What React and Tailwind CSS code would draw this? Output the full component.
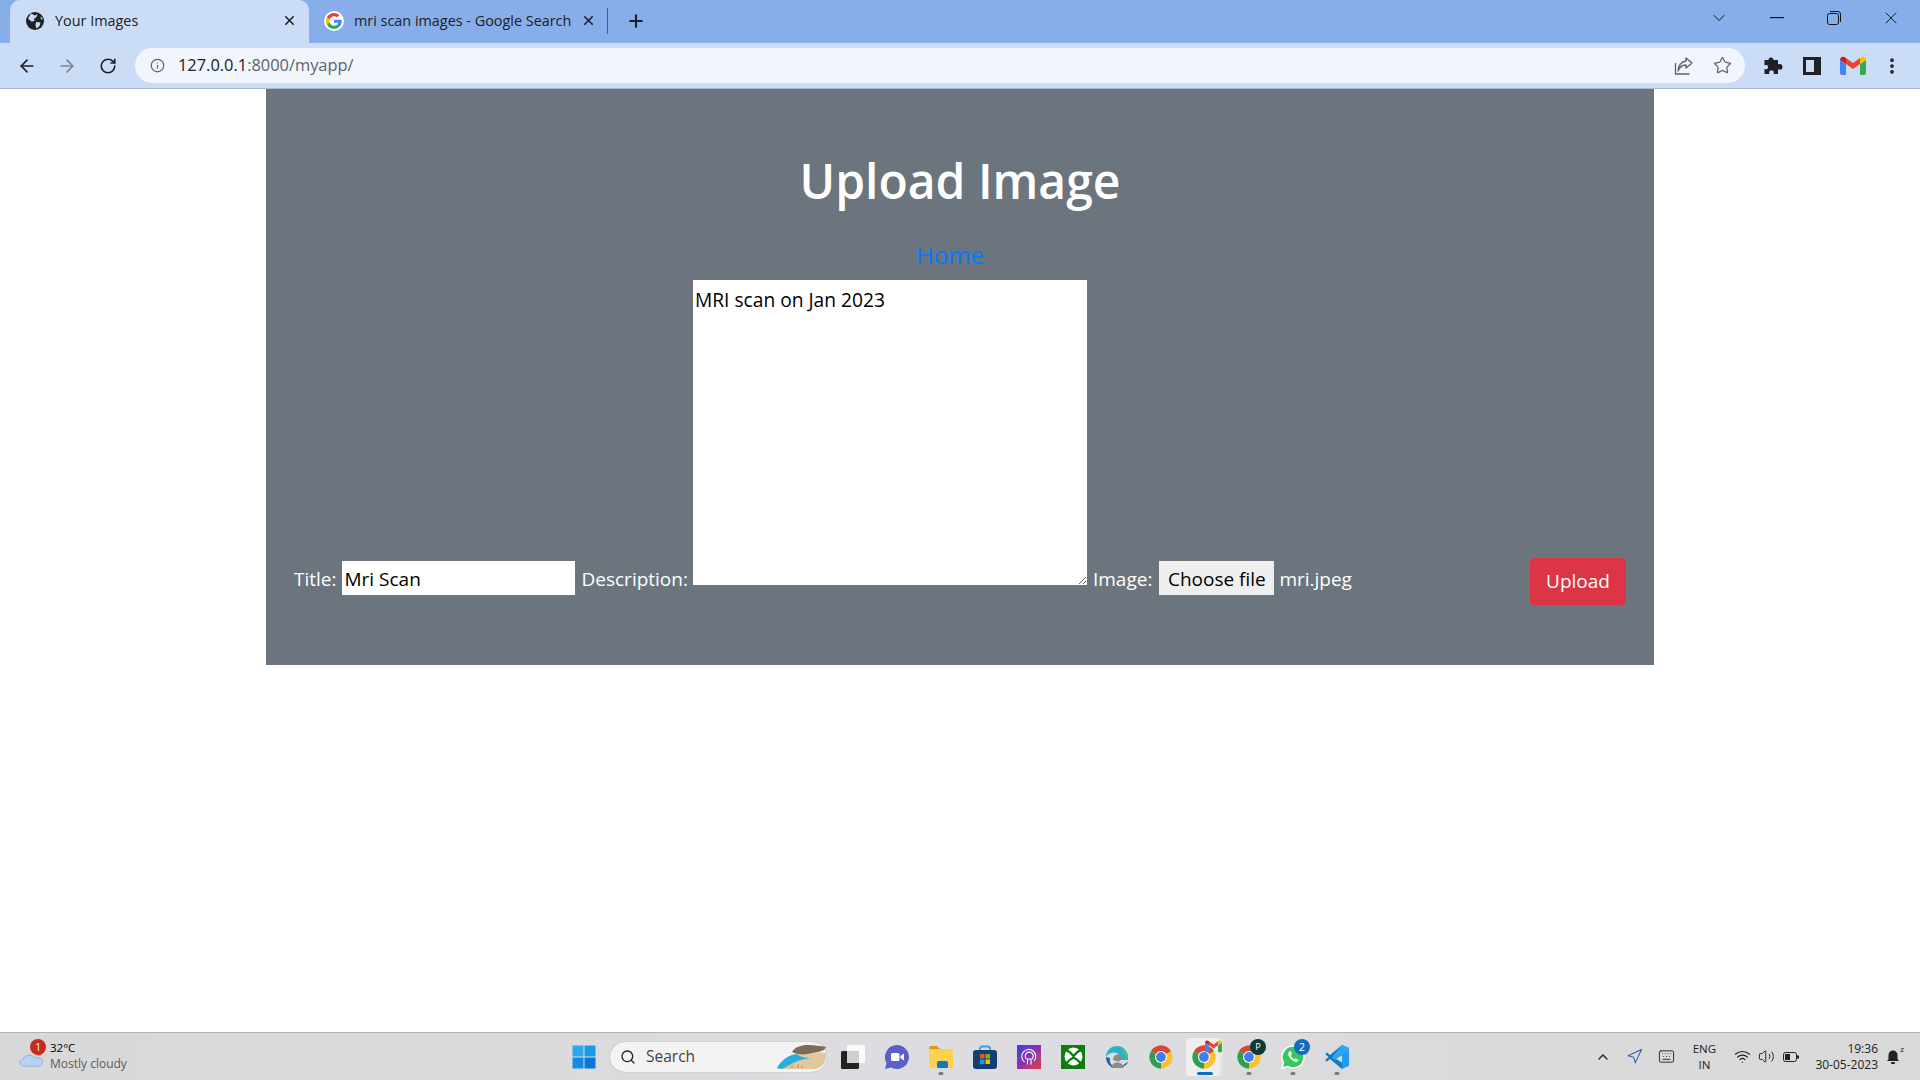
import React from "react";
import {
  ArrowLeft,
  ArrowRight,
  RotateCw,
  Info,
  Star,
  X,
  Plus,
  ChevronDown,
  ChevronUp,
  EllipsisVertical,
  Search,
  Navigation,
  Keyboard,
  Wifi,
  Volume2,
} from "lucide-react";

const font = "font-['Open_Sans','Liberation_Sans',sans-serif]";

function GlobeIcon() {
  return (
    <svg width="18" height="18" viewBox="0 0 18 18">
      <circle cx="9" cy="9" r="9" fill="#202124" />
      <path d="M5 1.500 9 3.500 11.500 2 10.500 5 8 7 8.500 9 5.500 9.500 2 6.500Z" fill="#cbdcf6" />
      <path d="M10 10 14.500 10.500 13.500 14 10.500 16.500 9.500 13.500Z" fill="#cbdcf6" />
      <path d="M14.500 4.500 17 7 15 7.500Z" fill="#cbdcf6" />
    </svg>
  );
}

function GoogleIcon() {
  return (
    <span className="flex h-[20px] w-[20px] items-center justify-center rounded-full bg-white">
      <svg width="16" height="16" viewBox="0 0 48 48">
        <path fill="#EA4335" d="M24 9.500c3.500 0 6.700 1.200 9.200 3.600l6.900-6.900C35.900 2.400 30.500 0 24 0 14.600 0 6.500 5.400 2.600 13.200l8 6.200C12.500 13.600 17.800 9.500 24 9.500z" />
        <path fill="#4285F4" d="M46.900 24.500c0-1.600-.1-3.100-.4-4.500H24v9h12.900c-.6 3-2.200 5.500-4.800 7.200l7.700 6c4.500-4.200 7.100-10.300 7.100-17.700z" />
        <path fill="#FBBC05" d="M10.600 28.600a14.500 14.500 0 0 1 0-9.200l-8-6.200a24 24 0 0 0 0 21.600z" />
        <path fill="#34A853" d="M24 48c6.500 0 11.900-2.100 15.900-5.800l-7.700-6c-2.200 1.400-4.900 2.300-8.200 2.300-6.200 0-11.500-4.200-13.400-9.900l-8 6.200C6.500 42.600 14.600 48 24 48z" />
      </svg>
    </span>
  );
}

function GmailIcon({ width = 26, height = 20 }) {
  return (
    <svg width={width} height={height} viewBox="0 0 26 20">
      <path d="M0 4v13a2 2 0 0 0 2 2h4V8z" fill="#4285F4" />
      <path d="M26 4v13a2 2 0 0 1-2 2h-4V8z" fill="#34A853" />
      <path d="M6 8 13 13 20 8V2l-7 5-7-5z" fill="#EA4335" />
      <path d="M0 4c0-3 3-4.500 6-2v6L0 4z" fill="#C5221F" />
      <path d="M26 4c0-3-3-4.500-6-2v6l6-4z" fill="#FBBC04" />
    </svg>
  );
}

function ShareIcon() {
  return (
    <svg width="20" height="20" viewBox="0 0 20 20" fill="none" stroke="#5f6368" strokeWidth="1.300">
      <path d="M1.500 7v11h14" />
      <path d="M12 2l6 5-6 5V9C8 9 5.500 11 4 15c0-5 3-9.500 8-10z" strokeLinejoin="round" />
    </svg>
  );
}

function PuzzleIcon() {
  return (
    <svg width="20" height="20" viewBox="0 0 20 20" fill="#202124">
      <path d="M8 1.500c1.500 0 2.500 1 2.500 2.500H15v4.500c2.500-1 4.500 0 4.500 2.500S17.500 14.500 15 13v5h-4.500c.8-2.500-.2-3.500-2-3.500s-3 1-2 3.500H1.500v-5c2.500.8 3.500-.2 3.500-2S4 8.500 1.500 9.500V4H5.500C5.500 2.500 6.500 1.500 8 1.500z" />
    </svg>
  );
}

function SidePanelIcon() {
  return (
    <svg width="18" height="18" viewBox="0 0 18 18">
      <rect width="18" height="18" fill="#202124" />
      <rect x="3" y="3" width="8" height="12" fill="#cbdcf6" />
    </svg>
  );
}

function RestoreIcon() {
  return (
    <svg width="14" height="14" viewBox="0 0 14 14" fill="none" stroke="#111" strokeWidth="1">
      <rect x="0.500" y="2.500" width="11" height="11" rx="2" />
      <path d="M3 .5h8a2.500 2.500 0 0 1 2.500 2.500v8" />
    </svg>
  );
}

function ChromeIcon({ size = 24 }) {
  return (
    <svg width={size} height={size} viewBox="0 0 24 24">
      <path d="M12 12 3.340 7A10 10 0 0 1 20.660 7Z" fill="#DB4437" />
      <path d="M12 12 20.660 7A10 10 0 0 1 12 22Z" fill="#FBC02D" />
      <path d="M12 12 12 22A10 10 0 0 1 3.340 7Z" fill="#2E9E4F" />
      <circle cx="12" cy="12" r="5.200" fill="#fff" />
      <circle cx="12" cy="12" r="4.200" fill="#3F7FE8" />
    </svg>
  );
}

function WindowsIcon() {
  return (
    <svg width="24" height="24" viewBox="0 0 24 24">
      <rect x="0.500" y="0.500" width="11" height="11" fill="#29a8ea" />
      <rect x="12.500" y="0.500" width="11" height="11" fill="#1c9ae6" />
      <rect x="0.500" y="12.500" width="11" height="11" fill="#138ce0" />
      <rect x="12.500" y="12.500" width="11" height="11" fill="#0b76d6" />
    </svg>
  );
}

function BeachIcon() {
  return (
    <svg width="50" height="24" viewBox="0 0 50 24">
      <path d="M0 23C6 14 14 9 24 8c10-1 18-1 25 0 1 8-3 14-10 16H4z" fill="#e3c79d" />
      <path d="M0 23C5 14 12 10 20 9c3 3 8 4 14 4-8 1-15 3-20 6-3 2-7 4-10 5z" fill="#25aee0" />
      <path d="M15 7c3-5 9-7 16-7s13 1 18 2c-2 5-9 5-14 6-6 2-15 2-20-1z" fill="#7d6b57" />
      <path d="M15 20v3M21 19v4M25 21v2" stroke="#c99a3e" strokeWidth="1.200" />
    </svg>
  );
}

function TaskViewIcon() {
  return (
    <svg width="24" height="24" viewBox="0 0 24 24">
      <rect x="6" y="0" width="18" height="18" rx="1.500" fill="#fafafa" />
      <rect x="0" y="6" width="18" height="18" rx="1.500" fill="#222" />
      <rect x="6" y="6" width="12" height="12" fill="#cfcfcf" />
    </svg>
  );
}

function MeetIcon() {
  return (
    <svg width="24" height="24" viewBox="0 0 24 24">
      <path d="M12 0a12 12 0 1 1-6 22.400L0 24l1.600-6A12 12 0 0 1 12 0z" fill="#5b5fc7" />
      <rect x="6" y="8" width="8.500" height="8" rx="1.500" fill="#fff" />
      <path d="M15.500 11 19 8.500v7L15.500 13z" fill="#fff" />
    </svg>
  );
}

function FolderIcon() {
  return (
    <svg width="24" height="22" viewBox="0 0 24 22">
      <path d="M0 2a2 2 0 0 1 2-2h6l3 3H0z" fill="#d99a10" />
      <rect y="3" width="24" height="19" rx="1" fill="#fcd14d" />
      <rect x="8" y="15" width="11" height="7" rx="1.500" fill="#0f79c9" />
    </svg>
  );
}

function StoreIcon() {
  return (
    <svg width="24" height="24" viewBox="0 0 24 24">
      <path d="M7 6V3.500a2 2 0 0 1 2-2h6a2 2 0 0 1 2 2V6" fill="none" stroke="#2aa7e0" strokeWidth="1.800" />
      <rect y="5" width="24" height="19" rx="3" fill="#123f6d" />
      <rect x="7" y="9" width="4.500" height="4.500" fill="#f25022" />
      <rect x="12.500" y="9" width="4.500" height="4.500" fill="#7fba00" />
      <rect x="7" y="14.500" width="4.500" height="4.500" fill="#00a4ef" />
      <rect x="12.500" y="14.500" width="4.500" height="4.500" fill="#ffb900" />
    </svg>
  );
}

function PodcastIcon() {
  return (
    <span className="flex h-[24px] w-[24px] items-center justify-center bg-linear-to-br from-[#2b3fe0] via-[#8a2fb0] to-[#e8303a]">
      <svg width="18" height="18" viewBox="0 0 18 18" fill="none" stroke="#fff" strokeWidth="1.100">
        <path d="M4.500 14A7 7 0 1 1 14 13" />
        <path d="M6.500 11A4 4 0 1 1 12 11" />
        <path d="M7.500 16.500V11h3.500v5.500" />
      </svg>
    </span>
  );
}

function XboxIcon() {
  return (
    <span className="flex h-[24px] w-[24px] items-center justify-center bg-[#107c10]">
      <svg width="19" height="19" viewBox="0 0 18 18" fill="none">
        <circle cx="9" cy="9" r="8.500" fill="#fff" />
        <path d="M1.500 2.500C5 4 7.500 6.500 9 8.500 10.500 6.500 13 4 16.500 2.500" stroke="#107c10" strokeWidth="2.200" />
        <path d="M1.500 16C4 13 7 11 9 10 11 11 14 13 16.500 16" stroke="#107c10" strokeWidth="2.200" />
      </svg>
    </span>
  );
}

function EdgeProfileIcon() {
  return (
    <svg width="24" height="24" viewBox="0 0 24 24">
      <path d="M1 12a11 11 0 0 1 22 0v3H8c0-4 3-6 6-5-1-3-9-4-13 2z" fill="#2db0c9" />
      <path d="M23 12c0-3-2-8-8-9 4 2 5 6 5 9z" fill="#55c464" />
      <path d="M1 12c0 6 4 11 10 11-5-2-7-6-6-10z" fill="#1166a8" />
      <circle cx="12.500" cy="13" r="3.500" fill="#8c8c8c" />
      <path d="M6.500 23c0-4 3-5.500 6-5.500s6 1.500 6 5.500z" fill="#8c8c8c" />
      <path d="M18 22c2-1 4-3 5-5-3 1-5 3-5 5z" fill="#1166a8" />
    </svg>
  );
}

function WhatsappIcon() {
  return (
    <svg width="24" height="24" viewBox="0 0 24 24">
      <path d="M12 1a11 11 0 1 1-5.500 20.500L1 23l1.600-5.300A11 11 0 0 1 12 1z" fill="#35c95d" stroke="#fff" strokeWidth="1.500" />
      <path d="M8.500 6.500c-2 1.500-1.500 4 1 7s5.500 4.500 7 3l1-1.500-3-1.800-1 1.200c-1.500-.5-3-2-3.800-3.800l1.200-1L9.800 6z" fill="#fff" />
    </svg>
  );
}

function VsCodeIcon() {
  return (
    <svg width="24" height="24" viewBox="0 0 24 24">
      <path d="M17 0 24 3v18l-7 3V0z" fill="#1f9cf0" />
      <path d="M17 0v6.500L8 12l9 5.500V24L5 14l-3 2.500L0 15l3.500-3L0 9l2-1.500L5 10z" fill="#0f7cc4" />
      <path d="M17 0 24 3v3L9.500 15 7 12z" fill="#2aa7f0" />
    </svg>
  );
}

function Dot() {
  return <span className="absolute bottom-[5px] left-1/2 h-[3px] w-[5px] -translate-x-1/2 rounded-full bg-[#7a7a7a]" />;
}

function Slot({ children, dot }) {
  return (
    <div className="relative flex h-[47px] w-[44px] items-center justify-center">
      {children}
      {dot && <Dot />}
    </div>
  );
}

function BrowserBar() {
  return (
    <div className="shrink-0">
      {/* Tabs */}
      <div className="flex h-[43px] items-end bg-[#87aee9] pl-[10px] text-[14.400px] text-[#202124]">
        <div className="flex h-[43px] w-[299px] items-center rounded-t-[10px] bg-[#cbdcf6] pb-[2px] pl-[16px] pr-[12px]">
          <GlobeIcon />
          <span className="ml-[11px] flex-1">Your Images</span>
          <X size={15} strokeWidth={2.500} />
        </div>
        <div className="flex h-[43px] w-[307px] items-center pb-[2px] pl-[15px]">
          <GoogleIcon />
          <span className="ml-[10px] w-[217px] whitespace-nowrap">mri scan images - Google Search</span>
          <X size={15} strokeWidth={2.500} className="ml-[10px]" />
          <span className="ml-[11px] h-[26px] w-px bg-[#4a5a72]" />
        </div>
        <div className="flex h-[43px] w-[40px] items-center justify-center pb-[2px]">
          <Plus size={20} strokeWidth={2.500} />
        </div>
        <div className="ml-auto flex h-[36px] items-center self-start text-[#111]">
          <ChevronDown size={20} strokeWidth={1.200} />
          <svg width="14" height="2" viewBox="0 0 14 2" className="ml-[41px]">
            <rect width="14" height="1.200" fill="#111" />
          </svg>
          <span className="ml-[43px]">
            <RestoreIcon />
          </span>
          <X size={20} strokeWidth={1.100} className="ml-[40px] mr-[19px]" />
        </div>
      </div>
      {/* Toolbar */}
      <div className="flex h-[46px] items-center border-b border-[#a9b6cb] bg-[#cbdcf6]">
        <ArrowLeft size={20} strokeWidth={2} className="ml-[17px] text-[#202124]" />
        <ArrowRight size={20} strokeWidth={2} className="ml-[20px] text-[#7d8590]" />
        <RotateCw size={18} strokeWidth={2.200} className="ml-[22px] text-[#202124]" />
        <div className="ml-[18px] flex h-[35px] w-[1610px] items-center rounded-full bg-[#f1f5fc] pl-[15px]">
          <Info size={15} strokeWidth={2} className="text-[#5f6368]" />
          <span className="ml-[13px] text-[16.400px] text-[#202124]">
            127.0.0.1<span className="text-[#5f6368]">:8000/myapp/</span>
          </span>
          <span className="ml-auto">
            <ShareIcon />
          </span>
          <Star size={19} strokeWidth={1.600} className="ml-[19px] mr-[13px] text-[#5f6368]" />
        </div>
        <span className="ml-[18px]">
          <PuzzleIcon />
        </span>
        <span className="ml-[20px]">
          <SidePanelIcon />
        </span>
        <span className="ml-[19px]">
          <GmailIcon />
        </span>
        <EllipsisVertical size={20} strokeWidth={2.500} className="ml-[16px] text-[#202124]" />
      </div>
    </div>
  );
}

function UploadPanel() {
  return (
    <div className="mx-auto flex w-[1388px] flex-col bg-[#6c757d] pb-[60px] pl-[28px] pr-[28px] pt-[56px] text-white">
      <h1 className="h-[72px] text-center text-[48px] font-semibold leading-[72px]">Upload Image</h1>
      <div className="mt-[22px] h-[32px] pr-[20px] text-center">
        <a className="text-[24px] leading-[32px] text-[#007bff]">Home</a>
      </div>
      <form className="mt-[9px] flex items-end justify-between">
        <div className="mb-[10px] flex items-end gap-[6px] text-[19px]">
          <label className="-mr-[1px] h-[34px] leading-[36px]">Title:</label>
          <input
            defaultValue="Mri Scan"
            className="h-[34px] w-[233px] bg-white px-[3px] pt-[2px] text-[19px] text-black outline-none"
          />
          <label className="-mr-[1px] ml-[1px] h-[34px] leading-[36px]">Description:</label>
          <textarea
            defaultValue="MRI scan on Jan 2023"
            className="mb-[10px] h-[305px] w-[394px] bg-white px-[2px] pb-[2px] pt-[3px] text-[19.200px] leading-[33px] text-black outline-none"
          />
          <label className="mr-[1px] h-[34px] leading-[36px]">Image:</label>
          <span className="flex h-[34px] w-[115px] items-center justify-center bg-[#efefef] pt-[2px] text-[19px] text-black">
            Choose file
          </span>
          <span className="-ml-[1px] h-[34px] leading-[36px]">mri.jpeg</span>
        </div>
        <button
          type="button"
          className="h-[47px] w-[96px] rounded-[4px] bg-[#dc3545] text-[19px] text-white"
        >
          Upload
        </button>
      </form>
    </div>
  );
}

function Taskbar() {
  return (
    <div className="flex h-[48px] shrink-0 items-center border-t border-[#b4b4b4] bg-linear-to-r from-[#d8d8d8] via-[#dddde1] to-[#d9d9d9]">
      {/* Weather */}
      <div className="flex w-[562px] items-center pl-[19px]">
        <div className="relative h-[30px] w-[31px]">
          <svg width="24" height="14" viewBox="0 0 24 18" preserveAspectRatio="none" className="absolute bottom-[5px] left-0">
            <path d="M5 17a4.500 4.500 0 0 1-1-8.800A6.500 6.500 0 0 1 16 6a5.500 5.500 0 0 1 4 11z" fill="#b5d2f3" stroke="#7ba8e0" strokeWidth="0.800" />
          </svg>
          <span className="absolute left-[17px] top-[8px] h-[6px] w-[6px] rounded-full bg-[#ee8a2c]" />
          <span className="absolute left-[11px] top-[-3px] flex h-[16px] w-[16px] items-center justify-center rounded-full bg-[#c42b1c] text-[10px] leading-none text-white">
            1
          </span>
        </div>
        <div className="-mt-[2px] flex flex-col text-[12px] leading-[16px]">
          <span className="text-[11.500px] text-black">32°C</span>
          <span className="text-[#5c5c5c]">Mostly cloudy</span>
        </div>
      </div>
      {/* Centre icons */}
      <Slot>
        <WindowsIcon />
      </Slot>
      <div className="ml-[4px] flex h-[30px] w-[217px] items-center rounded-full bg-[#f3f3f3] pl-[10px] text-[15.500px] text-[#444] shadow-[0_0_1px_#888]">
        <Search size={16} strokeWidth={2} className="text-[#222]" />
        <span className="ml-[10px] flex-1">Search</span>
        <BeachIcon />
      </div>
      <div className="ml-[4px] flex">
        <Slot><TaskViewIcon /></Slot>
        <Slot><MeetIcon /></Slot>
        <Slot dot><FolderIcon /></Slot>
        <Slot><StoreIcon /></Slot>
        <Slot><PodcastIcon /></Slot>
        <Slot><XboxIcon /></Slot>
        <Slot><EdgeProfileIcon /></Slot>
        <Slot><ChromeIcon size={28} /></Slot>
        <div className="relative ml-[3px] mr-[7px] flex h-[38px] w-[34px] items-center self-center rounded-[4px] bg-[#eeeeee] pl-[4px] shadow-[3px_0_0_#e4e4e4]">
          <ChromeIcon size={28} />
          <span className="absolute -right-[2px] top-[2px]">
            <GmailIcon width={17} height={13} />
          </span>
          <span className="absolute bottom-[1px] left-[11px] h-[3px] w-[16px] rounded-full bg-[#0f6cbd]" />
        </div>
        <Slot dot>
          <ChromeIcon size={28} />
          <span className="absolute right-[5px] top-[6px] flex h-[16px] w-[16px] items-center justify-center rounded-full bg-[#0b3b33] text-[9px] text-white">
            P
          </span>
        </Slot>
        <Slot dot>
          <WhatsappIcon />
          <span className="absolute right-[5px] top-[6px] flex h-[16px] w-[16px] items-center justify-center rounded-full bg-[#0f6cbd] text-[11px] text-white">
            2
          </span>
        </Slot>
        <Slot dot><VsCodeIcon /></Slot>
      </div>
      {/* Tray */}
      <div className="ml-auto flex items-center text-[#222]">
        <ChevronUp size={16} strokeWidth={2} />
        <Navigation size={17} strokeWidth={1.500} className="ml-[15px] text-[#2a62b0]" />
        <Keyboard size={17} strokeWidth={1.300} className="ml-[15px]" />
        <div className="ml-[9px] flex w-[40px] flex-col items-center text-[11.500px] leading-[16px]">
          <span>ENG</span>
          <span>IN</span>
        </div>
        <Wifi size={17} strokeWidth={1.600} className="ml-[10px]" />
        <Volume2 size={17} strokeWidth={1.400} className="ml-[7px]" />
        <svg width="16" height="10" viewBox="0 0 16 10" className="ml-[8px]">
          <rect x="0.500" y="0.500" width="13" height="9" rx="2" fill="none" stroke="#222" />
          <rect x="2" y="2" width="5" height="6" fill="#222" />
          <rect x="14" y="3.500" width="2" height="3" fill="#222" />
        </svg>
        <div className="ml-[16px] flex flex-col items-end text-[12px] leading-[16px]">
          <span>19:36</span>
          <span>30-05-2023</span>
        </div>
        <div className="relative ml-[8px] mr-[19px] flex">
          <svg width="15" height="16" viewBox="0 0 15 16">
            <path d="M7 1.500a4.500 4.500 0 0 1 4.500 4.500v4l1.500 2H1l1.500-2V6A4.500 4.500 0 0 1 7 1.500z" fill="#222" />
            <rect x="5" y="13" width="4" height="2" rx="1" fill="#222" />
          </svg>
          <span className="absolute -right-[3px] -top-[4px] text-[8px] leading-none">z</span>
        </div>
      </div>
    </div>
  );
}

export default function App() {
  return (
    <div className={`flex h-screen flex-col overflow-hidden bg-white ${font}`}>
      <BrowserBar />
      <div className="flex-1">
        <UploadPanel />
      </div>
      <Taskbar />
    </div>
  );
}
